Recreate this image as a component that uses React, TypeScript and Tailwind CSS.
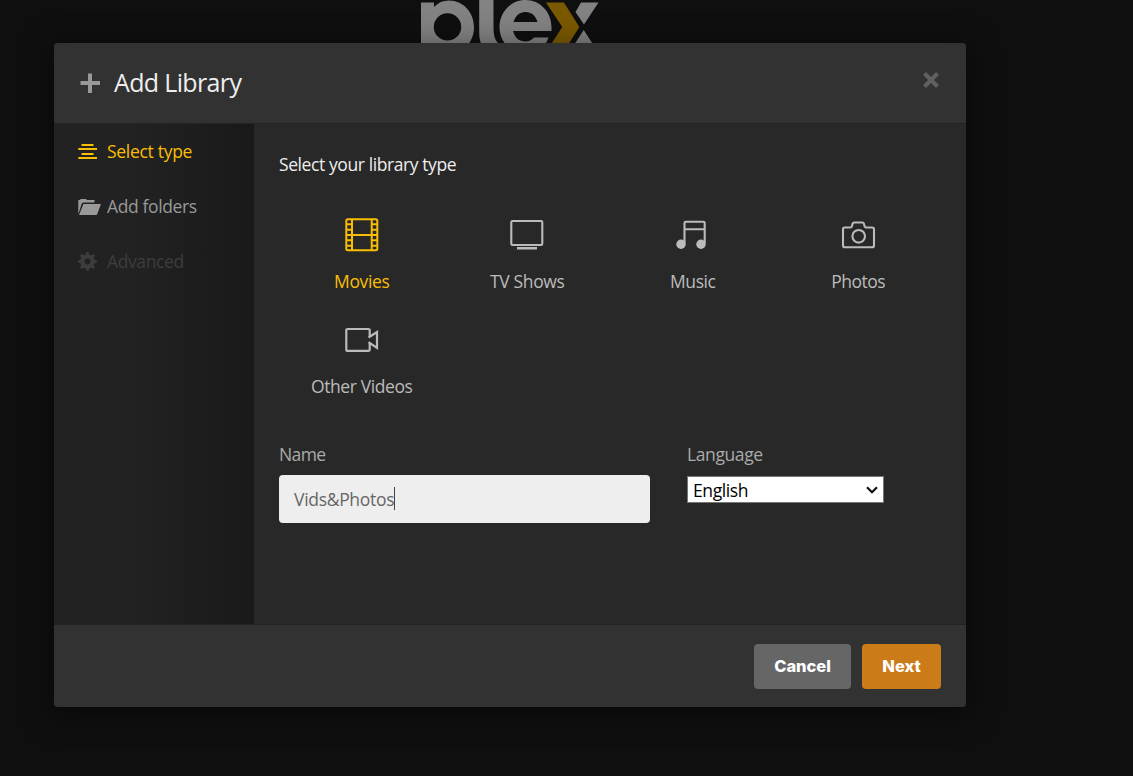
import type { ReactNode } from "react";

function PlexLogo() {
  return (
    <svg width="180" height="60" viewBox="420 0 180 60" fill="none">
      <g fill="#828282">
        <path d="M421 2.5H434V7C438 2.6 443 .5 449 .5C463 .5 474 12 474 27.5C474 42 463 54 449 54C443 54 438 52 434 48V60H421ZM447.5 13.2A13.7 13.7 0 1 0 447.5 40.600A13.7 13.7 0 1 0 447.5 13.2Z" fillRule="evenodd" />
        <path d="M479.2 0H493.5V27C493.5 35 494.500 39 498 43L502 47H483C480 43 479.2 38 479.2 32Z" />
        <path d="M525.500 0C540 0 551.500 12 551.500 27V31H513C515 38 519 41.500 525.500 41.500C529 41.500 531.500 40 534 37.500H548.500C545 48 536 54 525.500 54C511 54 499.500 42 499.500 27C499.500 12 511 0 525.500 0ZM513.500 22H537.500C535.500 15.500 531.500 12 525.500 12C519.500 12 515.500 15.500 513.500 22Z" fillRule="evenodd" />
        <path d="M581 2.500H598.500L584 24.500L575.500 12ZM583.700 30L592.500 43.500H575Z" />
      </g>
      <path d="M546 2.500H564L579.300 27L569 43.500H551.500L562.300 27Z" fill="#7b5900" />
    </svg>
  );
}

function PlusIcon() {
  return (
    <svg width="20" height="20" viewBox="0 0 20 20" fill="#999">
      <path d="M8 .5h4v7.500h8v4H12v8H8V12H.5V8H8Z" />
    </svg>
  );
}

function CloseIcon() {
  return (
    <svg width="16" height="16" viewBox="0 0 16 16" stroke="#606060" strokeWidth="4.200">
      <path d="M1.500 1.500l13 13M14.500 1.500l-13 13" />
    </svg>
  );
}

function LinesIcon() {
  return (
    <svg width="19" height="16" viewBox="0 0 19 16" fill="currentColor">
      <path d="M3.500 0h12v2H3.500ZM.3 4h18.700v2H.3ZM3.500 9h12v2H3.500ZM.3 13h18.700v2H.3Z" />
    </svg>
  );
}

function FolderIcon() {
  return (
    <svg width="23" height="16" viewBox="0 0 23 16" fill="currentColor">
      <path d="M.3 14V1.500Q.3 1 .8 1H1.800L2.800 0H8L9 1H16.500V3.500H5.200L3.700 4.500L.8 14Z" />
      <path d="M5.400 5H23L19.200 15.200Q18.900 16 18 16H1Z" />
    </svg>
  );
}

const TEETH = [0, 45, 90, 135];

function CogIcon() {
  return (
    <svg width="19" height="19" viewBox="-9.500 -9.500 19 19">
      <circle r="5" fill="none" stroke="currentColor" strokeWidth="4" />
      {TEETH.map((a) => (
        <path key={a} d="M-2 -6L-1.300 -9.300H1.300L2 -6ZM-2 6L-1.300 9.300H1.300L2 6Z" fill="currentColor" transform={`rotate(${a})`} />
      ))}
    </svg>
  );
}

function MovieIcon() {
  return (
    <svg width="36" height="36" viewBox="0 0 36 36" fill="none" stroke="currentColor" strokeWidth="2">
      <rect x="2.300" y="2.300" width="31" height="31" rx="1.500" />
      <path d="M8 2v32M27.700 2v32M8 18h20" />
      <path d="M3 7.300h5M3 12.700h5M3 18h5M3 23.300h5M3 28.700h5M28 7.300h5M28 12.700h5M28 18h5M28 23.300h5M28 28.700h5" />
    </svg>
  );
}

function TvIcon() {
  return (
    <svg width="36" height="36" viewBox="0 0 36 36" fill="none" stroke="currentColor" strokeWidth="2.100">
      <rect x="2.300" y="4" width="31" height="24" rx="1.200" />
      <path d="M8 31.300h20" strokeWidth="2.500" />
    </svg>
  );
}

function MusicIcon() {
  return (
    <svg width="36" height="36" viewBox="0 0 36 36" fill="none" stroke="currentColor" strokeWidth="2.100">
      <path d="M9.500 26.500V6q0-1.200 1.200-1.200h17.800q1.200 0 1.200 1.200v20.500M9.500 12.200h20.200" />
      <circle cx="6" cy="27.300" r="4.700" fill="currentColor" stroke="none" />
      <circle cx="26" cy="27.300" r="4.700" fill="currentColor" stroke="none" />
    </svg>
  );
}

function PhotoIcon() {
  return (
    <svg width="36" height="36" viewBox="0 0 36 36" fill="none" stroke="currentColor" strokeWidth="2.100">
      <path d="M4.500 10.500h6q1 0 1.300-1l.8-2.800Q13 5.500 14 5.500h8.500q1 0 1.400 1.200L24.700 9.500q.3 1 1.300 1H32q2 0 2 1.700V28.500q0 1.800-2 1.800H5q-2 0-2-1.800V12.200Q3 10.500 4.500 10.500Z" />
      <circle cx="18.700" cy="19.300" r="6.300" />
    </svg>
  );
}

function VideoIcon() {
  return (
    <svg width="36" height="36" viewBox="0 0 36 36" fill="none" stroke="currentColor" strokeWidth="2.200">
      <path d="M24.500 15.500l1.200-.8V8.200q0-1.200-1.500-1.200H3.800Q2.300 7 2.300 8.200v19.500Q2.300 28.900 3.800 28.900H24.200q1.500 0 1.500-1.200V21l-1.200-.8l8.500 5.800V10L24.500 15.500" />
    </svg>
  );
}

function LibraryType({ icon, label, color, spacing }: { icon: ReactNode; label: string; color: string; spacing: string }) {
  return (
    <div className={`flex h-[105px] flex-col items-center ${color}`}>
      {icon}
      <span className={`mt-[16px] text-[17.5px] leading-6 whitespace-nowrap ${spacing}`}>{label}</span>
    </div>
  );
}

function Step({ icon, label, color, spacing }: { icon: ReactNode; label: string; color: string; spacing: string }) {
  return (
    <div className={`flex h-[55px] items-center pl-6 ${color}`}>
      <span className="flex w-[29px] items-center">{icon}</span>
      <span className={`mb-[2px] text-[17.5px] leading-6 whitespace-nowrap ${spacing}`}>{label}</span>
    </div>
  );
}

export default function App() {
  return (
    <div className="grid h-[776px] w-[1133px] overflow-hidden bg-[#0f0f0f] font-['Open_Sans',sans-serif]">
      <div className="col-start-1 row-start-1 pl-[420px]">
        <PlexLogo />
      </div>
      <div className="relative col-start-1 row-start-1 mt-[43px] ml-[54px] flex h-[664px] w-[912px] flex-col overflow-hidden rounded-[4px] bg-[#282828] shadow-[0_5px_30px_rgba(0,0,0,0.5)]">
        <header className="flex h-[81px] shrink-0 items-center border-b border-[#222] bg-[#323232] pl-[26px]">
          <PlusIcon />
          <h1 className="mb-[2px] ml-[14px] text-[25px] leading-8 tracking-[-0.650px] text-[#eee]">Add Library</h1>
          <button className="mr-[27px] mb-[6px] ml-auto">
            <CloseIcon />
          </button>
        </header>
        <div className="flex h-[500px]">
          <nav className="w-[200px] bg-linear-to-r from-[#222] from-40% to-[#191919]">
            <Step icon={<LinesIcon />} label="Select type" color="text-[#f9be03]" spacing="tracking-[-0.300px]" />
            <Step icon={<FolderIcon />} label="Add folders" color="text-[#999]" spacing="tracking-[-0.380px]" />
            <Step icon={<CogIcon />} label="Advanced" color="text-[#3d3d3d]" spacing="tracking-[-0.400px]" />
          </nav>
          <main className="flex-1 pl-[25px]">
            <h2 className="mt-[28px] text-[17.5px] leading-6 tracking-[-0.410px] text-[#eee]">Select your library type</h2>
            <div className="mt-[41px] grid w-[662px] grid-cols-4">
              <LibraryType icon={<MovieIcon />} label="Movies" color="text-[#f9be03]" spacing="tracking-[-0.380px]" />
              <LibraryType icon={<TvIcon />} label="TV Shows" color="text-[#bbb]" spacing="tracking-[-0.350px]" />
              <LibraryType icon={<MusicIcon />} label="Music" color="text-[#bbb]" spacing="tracking-[-0.450px]" />
              <LibraryType icon={<PhotoIcon />} label="Photos" color="text-[#bbb]" spacing="tracking-[-0.500px]" />
              <LibraryType icon={<VideoIcon />} label="Other Videos" color="text-[#bbb]" spacing="tracking-[-0.400px]" />
            </div>
            <div className="mt-[15px] flex">
              <div className="w-[408px]">
                <div className="text-[17.5px] leading-6 tracking-[-0.600px] text-[#aaa]">Name</div>
                <div className="mt-[9px] flex h-12 w-[371px] items-center rounded-[4px] bg-[#eee] pl-[15px] text-[17.5px] text-[#666]">
                  <span className="tracking-[-0.300px]">Vids&amp;Photos</span>
                  <span className="mb-[2px] h-[23px] w-px bg-[#444]" />
                </div>
              </div>
              <div>
                <div className="text-[17.5px] leading-6 tracking-[-0.400px] text-[#aaa]">Language</div>
                <div className="mt-[10px] flex h-[27px] w-[197px] items-center justify-between border border-[#767676] bg-white pr-[5px] pl-[5px] text-[17.5px] text-black">
                  <span className="mt-[2px] tracking-[-0.400px]">English</span>
                  <svg width="12" height="8" viewBox="0 0 12 8" fill="none" stroke="#111" strokeWidth="2.200">
                    <path d="M1 1.200l5 5 5-5" />
                  </svg>
                </div>
              </div>
            </div>
          </main>
        </div>
        <footer className="flex flex-1 items-center justify-end gap-[11px] border-t border-[#222] bg-[#323232] pr-[25px] font-['Inter',sans-serif] text-[16.500px] font-extrabold text-white">
          <button className="h-[45px] w-[97px] rounded-[4px] bg-[#666] pt-px tracking-[-0.050px]">Cancel</button>
          <button className="h-[45px] w-[79px] rounded-[4px] bg-[#cc7b19] pt-px tracking-[-0.050px]">Next</button>
        </footer>
      </div>
    </div>
  );
}
